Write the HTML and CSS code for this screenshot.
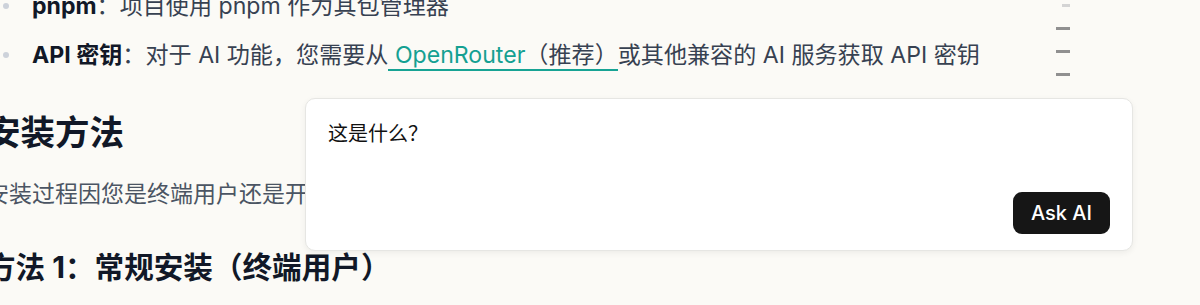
FILE: index.html
```html
<!DOCTYPE html>
<html lang="zh-CN">
<head>
<meta charset="utf-8">
<title>安装方法</title>
<link rel="stylesheet" href="styles.css">
</head>
<body>
<div class="page">
  <main class="content">
    <ul class="reqs">
      <li><span><strong>pnpm</strong>：项目使用 pnpm 作为其包管理器</span></li>
      <li><span><strong>API 密钥</strong>：对于 AI 功能，您需要从<span class="sel"> <a class="link" href="#">OpenRouter</a>（推荐）</span>或其他兼容的 AI 服务获取 API 密钥</span></li>
    </ul>
    <h2 class="h2">安装方法</h2>
    <p class="para">安装过程因您是终端用户还是开发者而有所不同。</p>
    <h3 class="h3">方法 1：常规安装（终端用户）</h3>
  </main>
  <aside class="toc">
    <span class="dash dash-light"></span>
    <span class="dash"></span>
    <span class="dash"></span>
    <span class="dash"></span>
  </aside>
  <div class="ask">
    <div class="ask-text">这是什么？</div>
    <button class="ask-btn" type="button">Ask AI</button>
  </div>
</div>
</body>
</html>
```

FILE: styles.css
```css
html, body {
  margin: 0;
  padding: 0;
}
body {
  background: #fbfaf6;
  font-family: "Inter", "Noto Sans CJK SC", "Noto Sans", sans-serif;
  color: #374151;
  width: 1200px;
  height: 305px;
  overflow: hidden;
}
.page {
  position: relative;
  display: flex;
  align-items: flex-start;
  height: 305px;
}
.content {
  flex: none;
  width: 1050px;
  margin-left: -14px;
  margin-top: -14px;
}
.reqs {
  list-style: none;
  margin: 0;
  padding: 0 0 0 17px;
  display: flex;
  flex-direction: column;
  gap: 9px;
}
.reqs li {
  display: flex;
  align-items: center;
  font-size: 23.1px;
  line-height: 40px;
  white-space: nowrap;
}
.reqs li::before {
  content: "";
  flex: none;
  width: 6px;
  height: 6px;
  border-radius: 50%;
  background: #cdd2da;
  margin-right: 23px;
}
.reqs strong {
  font-weight: 700;
  color: #111827;
}
.sel {
  border-bottom: 2px solid #17a394;
}
.link {
  color: #14a092;
  text-decoration: none;
}
.h2 {
  margin: 35px 0 0;
  font-size: 34.5px;
  line-height: 45px;
  font-weight: 700;
  color: #111827;
}
.para {
  margin: 19px 0 0;
  font-size: 23px;
  line-height: 40px;
  color: #4b5563;
  white-space: nowrap;
}
.h3 {
  margin: 33px 0 0;
  font-size: 29.6px;
  line-height: 40px;
  font-weight: 700;
  color: #111827;
}
.toc {
  flex: none;
  width: 14px;
  margin-left: 20px;
  padding-top: 4px;
  display: flex;
  flex-direction: column;
  align-items: flex-end;
  gap: 20px;
}
.dash {
  display: block;
  width: 14px;
  height: 3px;
  background: #909090;
}
.dash-light {
  width: 8px;
  background: #d4d4d4;
}
.ask {
  position: absolute;
  left: 305px;
  top: 98px;
  width: 828px;
  height: 153px;
  box-sizing: border-box;
  background: #ffffff;
  border: 1px solid #e6e6e3;
  border-radius: 10px;
  box-shadow: 0 2px 6px rgba(0, 0, 0, 0.06);
  padding: 21px 22px 16px 22px;
  display: flex;
  flex-direction: column;
  justify-content: space-between;
}
.ask-text {
  font-size: 20px;
  line-height: 28px;
  color: #111111;
}
.ask-btn {
  align-self: flex-end;
  width: 97px;
  height: 42px;
  border: 0;
  border-radius: 9px;
  background: #161616;
  color: #ffffff;
  font-family: "Inter", "Noto Sans CJK SC", sans-serif;
  font-size: 20px;
  font-weight: 500;
  padding: 0;
  cursor: pointer;
}
```
